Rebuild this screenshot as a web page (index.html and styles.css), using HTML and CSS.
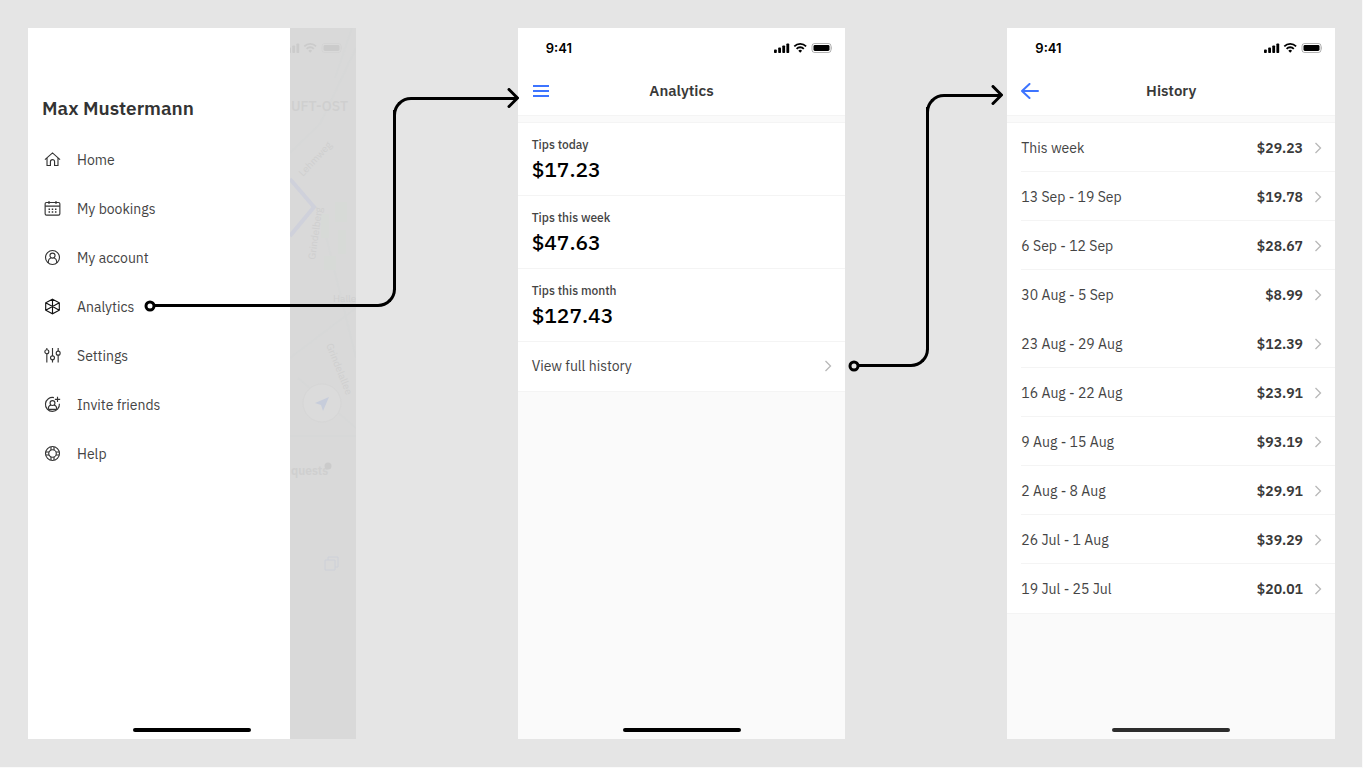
FILE: index.html
```
<!DOCTYPE html>
<html lang="en">
<head>
    <meta charset="UTF-8">
    <meta name="viewport" content="width=device-width, initial-scale=1.0">
    <title>Analytics flow</title>
    <link rel="stylesheet" href="styles.css">
</head>
<body>
    <!-- shared icons -->
    <svg class="sprite" width="0" height="0">
        <symbol id="status" viewBox="0 0 58 12">
            <rect x="0" y="7.5" width="2.800" height="3.500" rx=".8"/>
            <rect x="4.200" y="5.500" width="2.800" height="5.500" rx=".8"/>
            <rect x="8.300" y="3.500" width="2.800" height="7.500" rx=".8"/>
            <rect x="12.400" y="1.500" width="2.800" height="9.500" rx=".8"/>
            <g fill="none" stroke="currentColor" stroke-width="1.8">
                <path d="M20.3 4.3a8.4 8.4 0 0 1 11.8 0"/>
                <path d="M22.6 6.8a5 5 0 0 1 7.2 0"/>
            </g>
            <path d="M24.3 8.7a2.8 2.8 0 0 1 3.8 0L26.2 10.7z"/>
            <rect x="38" y="1.5" width="19" height="9" rx="2.6" fill="none" stroke="currentColor" stroke-opacity=".3"/>
            <rect x="39.500" y="3" width="16" height="6" rx="1.4"/>
            <path d="M57.7 4.5q1 1.5 0 3z" opacity=".4"/>
        </symbol>
        <symbol id="chevron" viewBox="0 0 8 12">
            <path d="M1.5 1l5 5-5 5" fill="none" stroke="currentColor" stroke-width="1.3"/>
        </symbol>
    </svg>

    <main class="board">
        <section class="screen menu-screen">
            <div class="drawer">
                <h1 class="user-name">Max Mustermann</h1>
                <nav class="menu">
                    <a class="menu-item" href="#">
                        <svg class="icon" viewBox="0 0 18 18"><path d="M1 9.2L9 2l8 7.2M3.2 7.5V15.3h3.6v-4a2.2 2.2 0 0 1 4.4 0v4h3.6V7.5"/></svg>
                        Home
                    </a>
                    <a class="menu-item" href="#">
                        <svg class="icon" viewBox="0 0 18 18"><rect x="1.2" y="2.600" width="15.600" height="13.400" rx="1.4"/><path d="M1.2 6.5h15.600M5.3 1v3.200M12.7 1v3.200"/><path d="M4.800 9.8h1.6M8.2 9.8h1.6M11.6 9.8h1.6M4.800 12.8h1.6M8.2 12.8h1.6M11.6 12.8h1.6" stroke-width="1.6"/></svg>
                        My bookings
                    </a>
                    <a class="menu-item" href="#">
                        <svg class="icon" viewBox="0 0 18 18"><circle cx="9" cy="9" r="7.4"/><circle cx="9" cy="7" r="2.7"/><path d="M4.6 14.800V13c0-2 1.2-3.1 2.8-3.8M13.4 14.800V13c0-2-1.2-3.1-2.8-3.8"/></svg>
                        My account
                    </a>
                    <div class="menu-row">
                        <a class="menu-item" href="#analytics">
                            <svg class="icon dark" viewBox="0 0 18 18"><path d="M9 1.2l7.200 3.900v7.8L9 16.8l-7.200-3.900V5.1zM9 9v7.8M9 9l7.200-3.900M9 9L1.800 5.1M9 1.2V9M9 9l-7.200 3.9M9 9l7.200 3.9"/></svg>
                            Analytics
                        </a>
                        <div class="link-line to-analytics">
                            <svg class="dot" viewBox="0 0 12 12"><circle cx="6" cy="6" r="4"/></svg>
                            <div class="line-low"></div>
                            <div class="line-high"></div>
                            <svg class="arrow" viewBox="0 0 12 20"><path d="M2 1.500l8.500 8.500L2 18.500"/></svg>
                        </div>
                    </div>
                    <a class="menu-item" href="#">
                        <svg class="icon" viewBox="0 0 18 18"><circle cx="3" cy="5" r="2.100"/><circle cx="9" cy="11.500" r="2.100"/><circle cx="15" cy="6.500" r="2.100"/><path d="M3 1v1.900M3 7.100v9.400M9 1v8.400M9 13.600v2.900M15 1v3.400M15 8.600v7.900"/></svg>
                        Settings
                    </a>
                    <a class="menu-item" href="#">
                        <svg class="icon" viewBox="0 0 18 18"><path d="M10.500 1.700A7.400 7.400 0 1 0 16.300 8.200M14.300 .8v5.600M11.500 3.600h5.600"/><circle cx="9" cy="7.500" r="2.600"/><path d="M4.600 14.500V13c0-2 1.200-3 2.800-3.500M13.400 14.500V13c0-2-1.200-3-2.800-3.500M5 14.200h8"/></svg>
                        Invite friends
                    </a>
                    <a class="menu-item" href="#">
                        <svg class="icon" viewBox="0 0 18 18"><circle cx="9" cy="9" r="7.400"/><circle cx="9" cy="9" r="4"/><path d="M7.400 2v3.300M10.600 2v3.300M7.400 12.700V16M10.600 12.700V16M2 7.400h3.300M2 10.600h3.300M12.700 7.400H16M12.700 10.600H16"/></svg>
                        Help
                    </a>
                </nav>
            </div>
            <!-- dimmed map behind the drawer -->
            <div class="backdrop">
                <svg class="map" viewBox="0 0 66 711" preserveAspectRatio="xMinYMin slice">
                    <g class="map-road">
                        <path d="M0 125L30 96 66 20M45 50L62 0M0 330L66 280M8 350L66 400M0 408h66M34 200L66 330"/>
                    </g>
                    <path class="map-park" d="M31 186h8v24h-8zM45 174h12v20H45zM48 202h8v24h-8zM34 228h12v14H34z"/>
                    <path class="map-route" d="M0 151l24 28-24 29"/>
                    <g class="map-text">
                        <text class="map-small" transform="translate(13 149) rotate(-47)">Lehmweg</text>
                        <text class="map-small" transform="translate(25 232) rotate(-82)">Grindelberg</text>
                        <text class="map-small" transform="translate(36 317) rotate(68)">Grindelallee</text>
                        <text class="map-small" x="43" y="274">Halle</text>
                        <text class="map-title" x="1" y="83">UFT-OST</text>
                        <text class="map-label" x="1" y="447">quests</text>
                    </g>
                    <use class="map-status" href="#status" x="-6" y="14" width="58" height="12"/>
                    <circle class="map-button" cx="32" cy="375" r="19"/>
                    <path class="map-pin" d="M25 375l14-6-6 14-2-6z"/>
                    <circle class="map-status" cx="38" cy="438" r="3.500"/>
                    <path class="map-copy" d="M35 532h10v10H35zM38 532v-3h10v10h-3"/>
                </svg>
            </div>
            <div class="home-bar"></div>
        </section>

        <section class="screen" id="analytics">
            <header class="top">
                <div class="status-bar">
                    <span>9:41</span>
                    <svg class="status-icons"><use href="#status"/></svg>
                </div>
                <div class="title-bar">
                    <button class="nav-button" type="button" aria-label="Menu">
                        <svg viewBox="0 0 18 16"><path d="M1 3h16M1 8h16M1 13h16"/></svg>
                    </button>
                    <h2>Analytics</h2>
                </div>
            </header>
            <div class="list">
                <div class="stat">
                    <h3>Tips today</h3>
                    <p>$17.23</p>
                </div>
                <div class="stat">
                    <h3>Tips this week</h3>
                    <p>$47.63</p>
                </div>
                <div class="stat">
                    <h3>Tips this month</h3>
                    <p>$127.43</p>
                </div>
                <div class="history-link">
                    <a class="row" href="#history">
                        <span>View full history</span>
                        <svg class="chevron"><use href="#chevron"/></svg>
                    </a>
                    <div class="link-line to-history">
                        <svg class="dot" viewBox="0 0 12 12"><circle cx="6" cy="6" r="4"/></svg>
                        <div class="line-low"></div>
                        <div class="line-high"></div>
                        <svg class="arrow" viewBox="0 0 12 20"><path d="M2 1.500l8.500 8.500L2 18.500"/></svg>
                    </div>
                </div>
            </div>
            <div class="home-bar"></div>
        </section>

        <section class="screen" id="history">
            <header class="top">
                <div class="status-bar">
                    <span>9:41</span>
                    <svg class="status-icons"><use href="#status"/></svg>
                </div>
                <div class="title-bar">
                    <button class="nav-button" type="button" aria-label="Back">
                        <svg viewBox="0 0 18 16"><path d="M17 8H1M8.500 1L1 8l7.500 7" stroke-linecap="round"/></svg>
                    </button>
                    <h2>History</h2>
                </div>
            </header>
            <div class="list weeks">
                <a class="row" href="#"><span>This week</span><b>$29.23</b><svg class="chevron"><use href="#chevron"/></svg></a>
                <a class="row" href="#"><span>13 Sep - 19 Sep</span><b>$19.78</b><svg class="chevron"><use href="#chevron"/></svg></a>
                <a class="row" href="#"><span>6 Sep - 12 Sep</span><b>$28.67</b><svg class="chevron"><use href="#chevron"/></svg></a>
                <a class="row no-line" href="#"><span>30 Aug - 5 Sep</span><b>$8.99</b><svg class="chevron"><use href="#chevron"/></svg></a>
                <a class="row" href="#"><span>23 Aug - 29 Aug</span><b>$12.39</b><svg class="chevron"><use href="#chevron"/></svg></a>
                <a class="row" href="#"><span>16 Aug - 22 Aug</span><b>$23.91</b><svg class="chevron"><use href="#chevron"/></svg></a>
                <a class="row" href="#"><span>9 Aug - 15 Aug</span><b>$93.19</b><svg class="chevron"><use href="#chevron"/></svg></a>
                <a class="row" href="#"><span>2 Aug - 8 Aug</span><b>$29.91</b><svg class="chevron"><use href="#chevron"/></svg></a>
                <a class="row" href="#"><span>26 Jul - 1 Aug</span><b>$39.29</b><svg class="chevron"><use href="#chevron"/></svg></a>
                <a class="row no-line" href="#"><span>19 Jul - 25 Jul</span><b>$20.01</b><svg class="chevron"><use href="#chevron"/></svg></a>
            </div>
            <div class="home-bar soft"></div>
        </section>
    </main>
</body>
</html>
```
FILE: styles.css
```
* {
    margin: 0;
    padding: 0;
    box-sizing: border-box;
}
html {
    background: #fff;
}
body {
    min-height: 100vh;
    display: flex;
    font-family: "IBM Plex Sans", Roboto, sans-serif;
    font-size: 14px;
    line-height: 20px;
    color: #444;
    background: #e5e5e5;
    border-right: 1px solid #fafafa;
    border-bottom: 1px solid #fafafa;
}
a {
    color: inherit;
    text-decoration: none;
}
.sprite {
    position: absolute;
}
.board {
    flex: 1;
    display: flex;
    gap: 162px;
    padding: 28px 27px 28px 28px;
}
.screen {
    flex: 1;
    position: relative;
    display: flex;
    flex-direction: column;
    background: #fafafa;
}
.home-bar {
    width: 118px;
    height: 4px;
    margin: auto auto 7px;
    border-radius: 2px;
    background: #000;
}
.home-bar.soft {
    background: #2d2d2d;
}

/* side menu */
.menu-screen {
    flex-direction: row;
}
.menu-screen .home-bar {
    position: absolute;
    left: 0;
    right: 0;
    bottom: 0;
}
.drawer {
    width: 80%;
    padding-top: 66px;
    background: #fff;
}
.user-name {
    padding: 0 14px;
    font-size: 19px;
    line-height: 28px;
    font-weight: 600;
    color: #333;
}
.menu {
    padding-top: 13px;
}
.menu-row,
.history-link {
    position: relative;
}
.menu-item {
    display: flex;
    align-items: center;
    gap: 16px;
    height: 49px;
    padding-left: 16px;
}
.icon {
    width: 17px;
    height: 17px;
    fill: none;
    stroke: #333;
    stroke-width: 1.2;
}
.icon.dark {
    stroke: #111;
}
.backdrop {
    flex: 1;
    overflow: hidden;
    background: #d9d9d9;
}
.map {
    display: block;
    width: 100%;
    min-width: 66px;
    height: 711px;
}
.map-road {
    fill: none;
    stroke: #d7d8d8;
    stroke-width: 2;
}
.map-park {
    fill: #d7dad7;
}
.map-route {
    fill: none;
    stroke: #cfd1db;
    stroke-width: 4;
}
.map-text {
    fill: #cfcfcf;
}
.map-small {
    font-size: 10px;
}
.map-title {
    font-size: 14px;
    font-weight: 500;
}
.map-label {
    font-size: 12px;
    font-weight: 600;
}
.map-status {
    color: #cbcbcb;
    fill: #cbcbcb;
}
.map-button {
    fill: #dbdbdb;
    stroke: #d6d6d6;
}
.map-pin {
    fill: #c7cddb;
}
.map-copy {
    fill: none;
    stroke: #cdd0d8;
}

/* lines between the screens */
.link-line {
    position: absolute;
    z-index: 1;
    display: flex;
    pointer-events: none;
}
.link-line svg {
    flex: none;
    fill: none;
    stroke: #000;
    stroke-width: 3;
    stroke-linecap: round;
    stroke-linejoin: round;
}
.dot {
    width: 12px;
    height: 12px;
    align-self: flex-end;
}
.line-low {
    flex: 1;
    margin: 22px 0 5px -2px;
    border: solid #000;
    border-width: 0 3px 3px 0;
    border-bottom-right-radius: 18px;
}
.line-high {
    margin: 9px -2px 22px -3px;
    border: solid #000;
    border-width: 3px 0 0 3px;
    border-top-left-radius: 18px;
}
.arrow {
    width: 12px;
    height: 20px;
    margin-left: -8px;
}
.to-analytics {
    left: 116px;
    right: -229px;
    bottom: 19px;
    height: 224px;
}
.to-analytics .line-high {
    width: 124px;
}
.to-history {
    left: calc(100% + 3px);
    width: 155px;
    bottom: 19px;
    height: 287px;
}
.to-history .line-high {
    width: 75px;
}

/* screen header */
.top {
    margin-bottom: 6px;
    background: #fff;
    border-bottom: 1px solid #f4f4f4;
}
.status-bar {
    display: flex;
    justify-content: space-between;
    align-items: center;
    height: 40px;
    padding: 0 13px 0 28px;
    font-family: Inter, sans-serif;
    font-size: 13px;
    font-weight: 600;
    color: #000;
}
.status-icons {
    width: 58px;
    height: 12px;
}
.title-bar {
    display: flex;
    align-items: center;
    height: 47px;
    padding: 0 14px 2px;
}
.title-bar h2 {
    flex: 1;
    margin-right: 18px;
    font-size: 15px;
    font-weight: 600;
    text-align: center;
    color: #393939;
}
.nav-button {
    width: 18px;
    height: 16px;
    border: none;
    background: none;
    cursor: pointer;
}
.nav-button svg {
    display: block;
    width: 18px;
    height: 16px;
    fill: none;
    stroke: #3d74ff;
    stroke-width: 2;
    stroke-linejoin: round;
}

/* lists */
.list {
    background: #fff;
    border: solid #f4f4f4;
    border-width: 1px 0;
}
.stat {
    height: 73px;
    padding: 12px 14px 0;
    border-bottom: 1px solid #f4f4f4;
}
.stat h3 {
    font-size: 12px;
    line-height: 20px;
    font-weight: 500;
}
.stat p {
    font-size: 21px;
    line-height: 28px;
    font-weight: 500;
    color: #000;
}
.row {
    display: flex;
    align-items: center;
    gap: 11px;
    height: 49px;
    padding-right: 13px;
    margin-left: 14px;
    border-bottom: 1px solid #f4f4f4;
}
.weeks .row {
    padding-top: 2px;
}
.row span {
    flex: 1;
}
.row b {
    font-weight: 600;
    color: #393939;
}
.no-line,
.history-link .row {
    border-color: transparent;
}
.chevron {
    width: 8px;
    height: 12px;
    color: #b8b8b8;
}
```
